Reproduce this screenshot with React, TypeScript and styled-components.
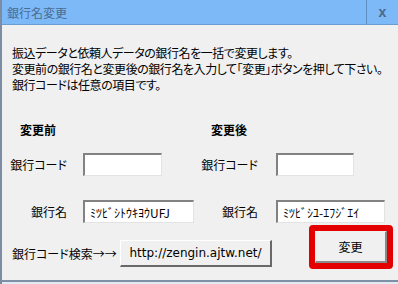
import React from 'react';
import styled, { createGlobalStyle } from 'styled-components';

const jp = `"Noto Sans CJK JP", "Noto Sans", sans-serif`;

const Global = createGlobalStyle`
  html, body { margin: 0; padding: 0; background: #f0f0f0; }
  body { font-family: ${jp}; }
  #root { width: 398px; height: 284px; overflow: hidden; }
`;

const Window = styled.div`
  width: 398px;
  height: 284px;
  box-sizing: border-box;
  border-left: 2px solid #7b8ca3;
  display: flex;
  flex-direction: column;
  background: #f0f0f0;
  font-family: ${jp};
  font-size: 12px;
  color: #000;
  font-feature-settings: "palt";
`;

const TitleBar = styled.div`
  height: 24px;
  flex: none;
  display: flex;
  background: #7db9f6;
  border-bottom: 1px solid #6b9dd3;
`;

const Title = styled.div`
  flex: 1;
  display: flex;
  align-items: center;
  padding-left: 5px;
  color: #4a6a92;
  font-size: 12px;
`;

const CloseBox = styled.div`
  width: 31px;
  border-left: 1px solid #5f8ec3;
  display: flex;
  align-items: center;
  justify-content: center;
  color: #4c6686;
  font: bold 14px "Liberation Sans", sans-serif;
`;

const Body = styled.div`
  flex: 1;
  min-height: 0;
  padding: 20px 0 0 10px;
  display: flex;
  flex-direction: column;
`;

const Description = styled.p`
  margin: 0;
  line-height: 16px;
  letter-spacing: -0.45px;
  white-space: nowrap;
`;

const Columns = styled.div`
  display: flex;
  margin-top: 29px;
`;

const Panel = styled.div<{ $w?: number }>`
  width: ${(p) => (p.$w ? `${p.$w}px` : 'auto')};
  display: flex;
  flex-direction: column;
`;

const Heading = styled.div`
  font-weight: bold;
  line-height: 16px;
  padding-left: 8px;
  margin-bottom: 15px;
`;

const FieldRow = styled.div<{ $gap: number }>`
  display: grid;
  grid-template-columns: 55px auto;
  column-gap: ${(p) => p.$gap}px;
  align-items: center;
  & + & {
    margin-top: 24px;
  }
`;

const Label = styled.label`
  justify-self: end;
  white-space: nowrap;
`;

const TextBox = styled.input<{ $w: number }>`
  width: ${(p) => p.$w}px;
  height: 23px;
  box-sizing: border-box;
  margin: 0;
  padding: 0 0 0 5px;
  background: #fff;
  border-style: solid;
  border-width: 2px 1px 1px 2px;
  border-color: #828282 #e3e3e3 #e3e3e3 #828282;
  font-family: ${jp};
  font-size: 12px;
  color: #000;
  outline: none;
`;

const BottomRow = styled.div`
  display: flex;
  align-items: flex-end;
  margin-top: 2px;
`;

const SearchGroup = styled.div`
  display: flex;
  align-items: center;
  margin-bottom: 2px;
`;

const SearchLabel = styled.span`
  white-space: nowrap;
  width: 108px;
`;

const RaisedButton = styled.button<{ $w: number; $h: number }>`
  width: ${(p) => p.$w}px;
  height: ${(p) => p.$h}px;
  box-sizing: border-box;
  margin: 0;
  padding: 0;
  background: #f0f0f0;
  border-style: solid;
  border-width: 1px 2px 2px 1px;
  border-color: #ffffff #696969 #696969 #ffffff;
  color: #000;
  display: flex;
  align-items: center;
  justify-content: center;
`;

const UrlButton = styled(RaisedButton)`
  font: 12px "DejaVu Sans", sans-serif;
`;

const ChangeButton = styled(RaisedButton)`
  font-family: ${jp};
  font-size: 12px;
  border-color: #f0f0f0 #8a8a8a #8a8a8a #f0f0f0;
`;

const RedFrame = styled.div`
  margin-left: 37px;
  border: 6px solid #e40000;
  border-radius: 4px;
  display: flex;
`;

const BottomEdge = styled.div`
  flex: none;
  height: 2px;
  border-top: 2px solid #7f8fa6;
  background: #e2e9f2;
`;

export default function App() {
  return (
    <>
      <Global />
      <Window>
        <TitleBar>
          <Title>銀行名変更</Title>
          <CloseBox>x</CloseBox>
        </TitleBar>
        <Body>
          <Description>
            振込データと依頼人データの銀行名を一括で変更します。
            <br />
            変更前の銀行名と変更後の銀行名を入力して「変更」ボタンを押して下さい。
            <br />
            銀行コードは任意の項目です。
          </Description>
          <Columns>
            <Panel $w={191}>
              <Heading>変更前</Heading>
              <FieldRow $gap={16}>
                <Label>銀行コード</Label>
                <TextBox $w={79} defaultValue="" />
              </FieldRow>
              <FieldRow $gap={16}>
                <Label>銀行名</Label>
                <TextBox $w={111} defaultValue="ﾐﾂﾋﾞｼﾄｳｷﾖｳUFJ" />
              </FieldRow>
            </Panel>
            <Panel>
              <Heading>変更後</Heading>
              <FieldRow $gap={18}>
                <Label>銀行コード</Label>
                <TextBox $w={78} defaultValue="" />
              </FieldRow>
              <FieldRow $gap={18}>
                <Label>銀行名</Label>
                <TextBox $w={109} defaultValue="ﾐﾂﾋﾞｼﾕ-ｴﾌｼﾞｴｲ" />
              </FieldRow>
            </Panel>
          </Columns>
          <BottomRow>
            <SearchGroup>
              <SearchLabel>銀行コード検索→→</SearchLabel>
              <UrlButton $w={152} $h={27}>http://zengin.ajtw.net/</UrlButton>
            </SearchGroup>
            <RedFrame>
              <ChangeButton $w={72} $h={32}>変更</ChangeButton>
            </RedFrame>
          </BottomRow>
        </Body>
        <BottomEdge />
      </Window>
    </>
  );
}
